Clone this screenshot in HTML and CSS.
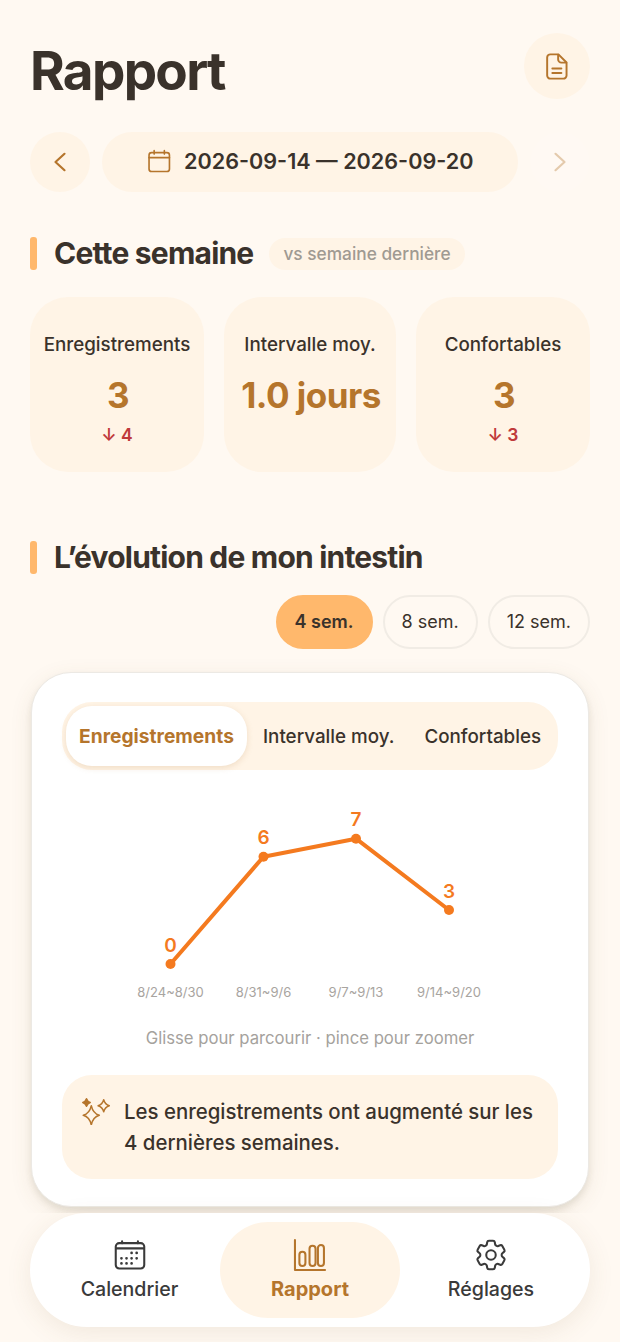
FILE: index.html
```html
<!DOCTYPE html>
<html lang="fr">
<head>
<meta charset="utf-8">
<title>Rapport</title>
<link rel="stylesheet" href="styles.css">
</head>
<body>
<div class="page">
  <main class="content">
    <header class="top">
      <h1 class="title">Rapport</h1>
      <button class="doc-btn" aria-label="Document">
        <svg class="icon-doc" viewBox="0 0 24 24" fill="none"><path d="M6.500 2.600h6.200l6.300 6.300v10a2.500 2.500 0 0 1-2.500 2.500h-10A2.500 2.500 0 0 1 4 18.900V5.100a2.500 2.500 0 0 1 2.500-2.500Z"/><path d="M12.500 2.800v3.700a2.500 2.500 0 0 0 2.500 2.500h3.800M8 13.500h7M8 17h7"/></svg>
      </button>
    </header>

    <div class="date-row">
      <button class="nav-arrow" aria-label="Précédent">
        <svg class="icon-chev" viewBox="0 0 24 24" fill="none"><path d="M16.500 3.800 7.500 12l9 8.200"/></svg>
      </button>
      <div class="date-pill">
        <svg class="icon-cal" viewBox="0 0 24 24" fill="none"><rect x="2" y="3.500" width="20" height="18.500" rx="2.500"/><path d="M2 8.500h20M7 1.600v3.400M17 1.600v3.400"/></svg>
        <span class="date-text">2026-09-14 — 2026-09-20</span>
      </div>
      <button class="nav-arrow is-off" aria-label="Suivant">
        <svg class="icon-chev" viewBox="0 0 24 24" fill="none"><path d="M7.500 3.800 16.500 12l-9 8.200"/></svg>
      </button>
    </div>

    <section class="week">
      <div class="sec-head">
        <span class="sec-bar"></span>
        <h2 class="sec-title">Cette semaine</h2>
        <span class="sec-badge">vs semaine dernière</span>
      </div>
      <div class="stats">
        <div class="stat">
          <div class="stat-label">Enregistrements</div>
          <div class="stat-value">3</div>
          <div class="stat-delta">↓ 4</div>
        </div>
        <div class="stat">
          <div class="stat-label">Intervalle moy.</div>
          <div class="stat-value">1.0 jours</div>
        </div>
        <div class="stat">
          <div class="stat-label">Confortables</div>
          <div class="stat-value">3</div>
          <div class="stat-delta">↓ 3</div>
        </div>
      </div>
    </section>

    <section class="trend">
      <div class="sec-head">
        <span class="sec-bar"></span>
        <h2 class="sec-title">L’évolution de mon intestin</h2>
      </div>
      <div class="ranges">
        <span class="range is-on">4 sem.</span>
        <span class="range">8 sem.</span>
        <span class="range">12 sem.</span>
      </div>
      <div class="card">
        <div class="tabs">
          <span class="tab is-on">Enregistrements</span>
          <span class="tab">Intervalle moy.</span>
          <span class="tab">Confortables</span>
        </div>
        <svg class="chart" viewBox="0 0 496 210" width="496" height="210">
          <polyline class="line" points="108.500,164 201.500,56.700 294,38.700 387,110"/>
          <circle class="pt" cx="108.500" cy="164" r="5"/>
          <circle class="pt" cx="201.500" cy="56.700" r="5"/>
          <circle class="pt" cx="294" cy="38.700" r="5"/>
          <circle class="pt" cx="387" cy="110" r="5"/>
          <text class="val" x="108.500" y="152">0</text>
          <text class="val" x="201.500" y="44">6</text>
          <text class="val" x="294" y="26">7</text>
          <text class="val" x="387" y="98">3</text>
          <text class="axis" x="108.500" y="197">8/24~8/30</text>
          <text class="axis" x="201.500" y="197">8/31~9/6</text>
          <text class="axis" x="294" y="197">9/7~9/13</text>
          <text class="axis" x="387" y="197">9/14~9/20</text>
        </svg>
        <p class="hint">Glisse pour parcourir · pince pour zoomer</p>
        <div class="insight">
          <svg class="icon-spark" viewBox="0 0 28 28" fill="none"><path d="M9.300 8.700Q11 16.600 17.300 18.300 11 20 9.300 28 7.600 20 1.300 18.300 7.600 16.600 9.300 8.700Z"/><path d="M21.700 2.700Q23 7.400 27.300 8.700 23 10 21.700 14.700 20.400 10 16.100 8.700 20.400 7.400 21.700 2.700Z"/><path class="spark-solid" d="M4.500 1.800Q5.400 4.600 8.200 5.500 5.400 6.400 4.500 9.200 3.600 6.400.800 5.500 3.600 4.600 4.500 1.800Z"/></svg>
          <p class="insight-text">Les enregistrements ont augmenté sur les 4 dernières semaines.</p>
        </div>
      </div>
    </section>
  </main>

  <div class="dock">
    <nav class="tabbar">
      <a class="tb-item">
        <svg class="tb-icon" viewBox="0 0 24 24" fill="none"><path d="M7 3.300v1.400M17 3.300v1.400M3 18.300V6.700a2.200 2.200 0 0 1 2.200-2.200h13.600A2.200 2.200 0 0 1 21 6.700v11.600a2.200 2.200 0 0 1-2.200 2.200H5.200A2.200 2.200 0 0 1 3 18.300ZM3 7.800h18"/><path class="dots" d="M13 10.700h.01M16.200 10.700h.01M6.600 14.100h.01M9.800 14.100h.01M13 14.100h.01M16.200 14.100h.01M6.600 17.300h.01M9.800 17.300h.01M13 17.300h.01"/></svg>
        <span class="tb-label">Calendrier</span>
      </a>
      <a class="tb-item is-on">
        <svg class="tb-icon" viewBox="0 0 24 24" fill="none"><path d="M2.500 2.500v19h19"/><rect x="5.300" y="9.900" width="3.800" height="9.100" rx="1.900"/><rect x="11.700" y="6.100" width="3.800" height="12.900" rx="1.900"/><rect x="17" y="5.700" width="3.800" height="13.300" rx="1.900"/></svg>
        <span class="tb-label">Rapport</span>
      </a>
      <a class="tb-item">
        <svg class="tb-icon" viewBox="0 0 24 24" fill="none"><path d="M9.594 3.940c.090-.542.560-.940 1.110-.940h2.593c.550 0 1.020.398 1.110.940l.213 1.281c.063.374.313.686.645.870.074.040.147.083.220.127.325.196.720.257 1.075.124l1.217-.456a1.125 1.125 0 0 1 1.370.490l1.296 2.247a1.125 1.125 0 0 1-.260 1.431l-1.003.827c-.293.241-.438.613-.430.992a7.723 7.723 0 0 1 0 .255c-.008.378.137.750.430.991l1.004.827c.424.350.534.955.260 1.430l-1.298 2.247a1.125 1.125 0 0 1-1.369.491l-1.217-.456c-.355-.133-.750-.072-1.076.124a6.470 6.470 0 0 1-.220.128c-.331.183-.581.495-.644.869l-.213 1.281c-.090.543-.560.940-1.110.940h-2.594c-.550 0-1.019-.398-1.110-.940l-.213-1.281c-.062-.374-.312-.686-.644-.870a6.520 6.520 0 0 1-.220-.127c-.325-.196-.720-.257-1.076-.124l-1.217.456a1.125 1.125 0 0 1-1.369-.490l-1.297-2.247a1.125 1.125 0 0 1 .260-1.431l1.004-.827c.292-.240.437-.613.430-.991a6.932 6.932 0 0 1 0-.255c.007-.380-.138-.751-.430-.992l-1.004-.827a1.125 1.125 0 0 1-.260-1.430l1.297-2.247a1.125 1.125 0 0 1 1.370-.491l1.216.456c.356.133.751.072 1.076-.124.072-.044.146-.086.220-.128.332-.183.582-.495.644-.869l.214-1.280Z"/><circle cx="12" cy="12" r="3"/></svg>
        <span class="tb-label">Réglages</span>
      </a>
    </nav>
  </div>
</div>
</body>
</html>
```

FILE: styles.css
```css
* { box-sizing: border-box; }
html, body { margin: 0; padding: 0; }
body {
  background: #fff9f2;
  color: #3a322b;
  font-family: Inter, "Noto Sans", sans-serif;
}
h1, h2, p { margin: 0; }
button { border: 0; padding: 0; font: inherit; }

.page {
  width: 620px;
  height: 1342px;
  display: flex;
  flex-direction: column;
  overflow: hidden;
}
.content {
  flex: 1;
  min-height: 0;
  padding: 33px 30px 0;
}

.top {
  display: flex;
  justify-content: space-between;
  align-items: center;
  height: 66px;
}
.title {
  padding-top: 10px;
  font-size: 53px;
  font-weight: 700;
  letter-spacing: -1.7px;
  line-height: 66px;
}
.doc-btn {
  width: 66px;
  height: 66px;
  border-radius: 50%;
  background: #fff4e6;
  display: flex;
  align-items: center;
  justify-content: center;
}
.icon-doc { width: 31px; height: 31px; }
.icon-doc path, .icon-chev path, .icon-cal rect, .icon-cal path, .icon-spark path {
  stroke: #b5752c;
  stroke-width: 1.5;
  stroke-linecap: round;
  stroke-linejoin: round;
}

.date-row {
  display: flex;
  gap: 12px;
  margin-top: 33px;
  height: 60px;
}
.nav-arrow {
  width: 60px;
  height: 60px;
  flex: none;
  border-radius: 50%;
  background: #fff4e6;
  display: flex;
  align-items: center;
  justify-content: center;
}
.nav-arrow.is-off { opacity: .35; background: #fffaf5; }
.icon-chev { width: 24px; height: 24px; }
.icon-chev path { stroke-width: 2.2; }
.date-pill {
  flex: 1;
  padding-bottom: 2px;
  border-radius: 30px;
  background: #fff4e6;
  display: flex;
  align-items: center;
  justify-content: center;
  gap: 13px;
}
.icon-cal { width: 24.500px; height: 24.500px; margin-top: 1px; }
.icon-cal rect, .icon-cal path { stroke-width: 1.6; }
.date-text {
  font-size: 21.600px;
  font-weight: 600;
}

.week { margin-top: 45px; }
.sec-head {
  display: flex;
  align-items: center;
  height: 33px;
}
.sec-bar {
  width: 7px;
  height: 33px;
  border-radius: 3px;
  background: #ffb86c;
  flex: none;
}
.sec-title {
  margin-left: 17px;
  font-size: 30px;
  font-weight: 700;
  letter-spacing: -.8px;
  line-height: 33px;
}
.sec-badge {
  margin-left: 16px;
  height: 32px;
  padding: 0 14px;
  border-radius: 16px;
  background: #fff4e6;
  color: #a09a92;
  font-size: 17.300px;
  font-weight: 500;
  line-height: 32px;
}
.stats {
  display: grid;
  grid-template-columns: 174px 172px 174px;
  gap: 20px;
  margin-top: 27px;
}
.stat {
  height: 175px;
  border-radius: 38px;
  background: #fff4e6;
  padding-top: 36px;
  text-align: center;
}
.stat-label {
  font-size: 18.800px;
  font-weight: 500;
  line-height: 24px;
}
.stat-value {
  margin-top: 17px;
  padding-left: 2px;
  color: #b5752c;
  font-size: 35px;
  font-weight: 700;
  letter-spacing: -.5px;
  line-height: 42px;
}
.stat-delta {
  margin-top: 8px;
  color: #c0393b;
  font-size: 17.500px;
  font-weight: 600;
  line-height: 22px;
}

.trend { margin-top: 69px; }
.ranges {
  display: flex;
  justify-content: flex-end;
  gap: 10px;
  margin-top: 21px;
}
.range {
  height: 54px;
  padding: 0 17px;
  border: 2px solid #f1ece5;
  border-radius: 27px;
  font-size: 18px;
  line-height: 50px;
}
.range.is-on {
  border-color: #ffb86c;
  background: #ffb86c;
  font-weight: 600;
}
.card {
  margin: 23px 1px 0;
  height: 535px;
  padding: 29px 30px 0;
  border: 1px solid #ece9e4;
  border-radius: 40px;
  background: #fff;
  box-shadow: 0 4px 6px rgba(70, 70, 40, .1), 0 6px 22px rgba(120, 90, 50, .1);
}
.tabs {
  display: flex;
  align-items: center;
  height: 68px;
  padding: 4px;
  border-radius: 30px;
  background: #fff4e6;
}
.tab {
  font-size: 18.800px;
  font-weight: 500;
  white-space: nowrap;
}
.tab:nth-child(2) { margin-left: 16px; }
.tab:nth-child(3) { margin-left: 30px; }
.tab.is-on {
  width: 181px;
  height: 60px;
  border-radius: 26px;
  background: #fff;
  box-shadow: 0 2px 6px rgba(180, 130, 70, .2);
  color: #b5752c;
  font-size: 19.200px;
  font-weight: 700;
  line-height: 60px;
  text-align: center;
}
.chart {
  display: block;
  margin-top: 30px;
}
.line {
  fill: none;
  stroke: #f47a1f;
  stroke-width: 4;
  stroke-linejoin: round;
}
.pt { fill: #f47a1f; }
.val {
  fill: #f47a1f;
  font-size: 19px;
  font-weight: 600;
  text-anchor: middle;
}
.axis {
  fill: #a8a4a0;
  font-size: 13px;
  text-anchor: middle;
}
.hint {
  margin-top: 16px;
  color: #a5a29d;
  font-size: 16.700px;
  line-height: 24px;
  text-align: center;
}
.insight {
  display: flex;
  align-items: flex-start;
  gap: 14px;
  margin-top: 25px;
  height: 104px;
  padding: 21px 20px 0;
  border-radius: 30px;
  background: #fff4e6;
}
.icon-spark { width: 28px; height: 28px; flex: none; margin-top: 1px; }
.icon-spark path { stroke-width: 1.5; }
.icon-spark .spark-solid { fill: #b5752c; }
.insight-text {
  font-size: 20.400px;
  font-weight: 500;
  line-height: 31px;
}

.dock {
  flex: none;
  height: 129px;
  padding: 0 30px;
  background: #fff9f2;
  position: relative;
}
.tabbar {
  height: 114px;
  padding: 0 8px 0 9px;
  display: grid;
  grid-template-columns: 181px 180px 182px;
  align-items: center;
  border-radius: 57px;
  background: #fff;
  box-shadow: 0 6px 26px rgba(120, 90, 50, .1);
}
.tb-item {
  height: 96px;
  padding-top: 14px;
  border-radius: 48px;
  display: flex;
  flex-direction: column;
  align-items: center;
  gap: 3px;
  color: #3a3a3a;
  font-size: 19.600px;
  font-weight: 500;
}
.tb-item.is-on {
  background: #fff4e6;
  color: #b5752c;
  font-size: 20px;
  font-weight: 700;
}
.tb-icon { width: 38px; height: 38px; }
.tb-icon path, .tb-icon circle, .tb-icon rect {
  stroke: currentColor;
  stroke-width: 1.3;
  stroke-linecap: round;
  stroke-linejoin: round;
}
.tb-icon .dots { stroke-width: 1.7; }
.tb-label { line-height: 24px; }
```
